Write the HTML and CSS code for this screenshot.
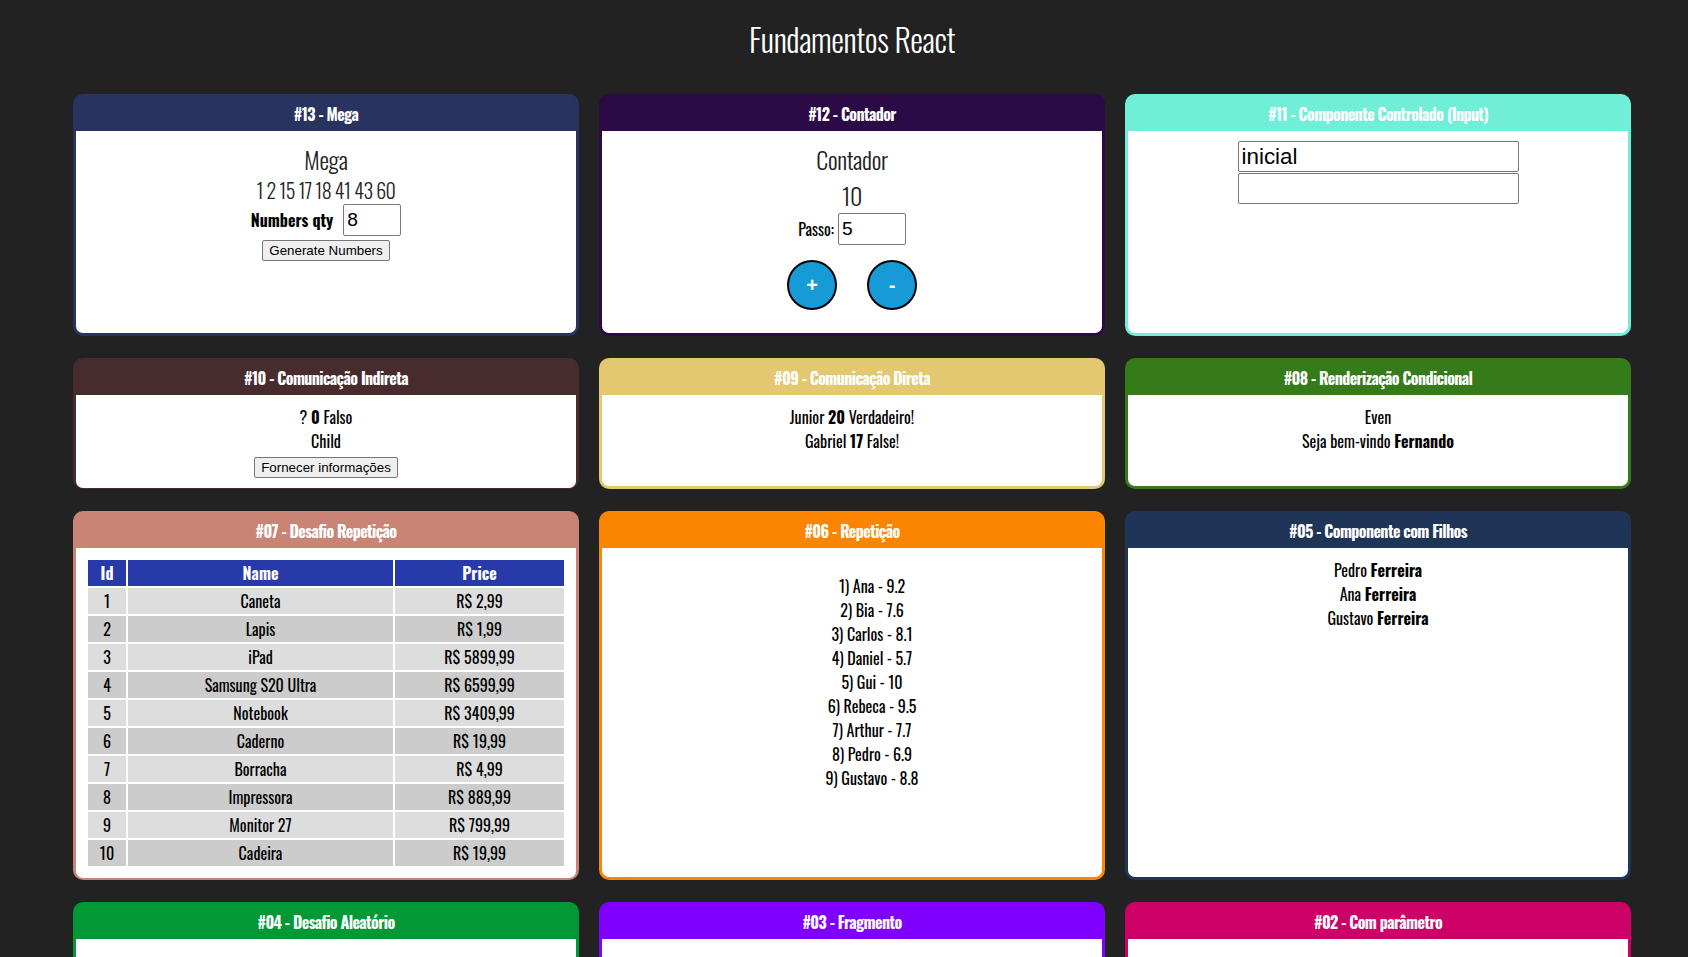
FILE: index.html
```html
<!DOCTYPE html>
<html lang="pt-BR">
<head>
<meta charset="utf-8">
<title>Fundamentos React</title>
<link rel="stylesheet" href="styles.css">
</head>
<body>
<div class="app">
  <h1 class="app-title">Fundamentos React</h1>
  <div class="cards">

    <section class="card accent-13">
      <div class="card-title">#13 - Mega</div>
      <div class="card-content">
        <h2 class="display">Mega</h2>
        <div class="mega-numbers">1 2 15 17 18 41 43 60</div>
        <div class="field-row">
          <strong>Numbers qty</strong>
          <input class="input input-qty" type="text" value="8">
        </div>
        <div class="btn-line btn-line-generate"><button class="btn">Generate Numbers</button></div>
      </div>
    </section>

    <section class="card accent-12">
      <div class="card-title">#12 - Contador</div>
      <div class="card-content">
        <h2 class="display">Contador</h2>
        <div class="display">10</div>
        <div class="field-row field-row-tight">
          <label>Passo:</label>
          <input class="input input-step" type="text" value="5">
        </div>
        <div class="counter-buttons">
          <button class="circle">+</button>
          <button class="circle">-</button>
        </div>
      </div>
    </section>

    <section class="card accent-11">
      <div class="card-title">#11 - Componente Controlado (Input)</div>
      <div class="card-content">
        <input class="input input-wide" type="text" value="inicial">
        <input class="input input-wide" type="text" value="">
      </div>
    </section>

    <section class="card accent-10">
      <div class="card-title">#10 - Comunicação Indireta</div>
      <div class="card-content">
        <div>? <strong>0</strong> Falso</div>
        <div>Child</div>
        <div class="btn-line btn-line-info"><button class="btn">Fornecer informações</button></div>
      </div>
    </section>

    <section class="card accent-09">
      <div class="card-title">#09 - Comunicação Direta</div>
      <div class="card-content">
        <div>Junior <strong>20</strong> Verdadeiro!</div>
        <div>Gabriel <strong>17</strong> False!</div>
      </div>
    </section>

    <section class="card accent-08">
      <div class="card-title">#08 - Renderização Condicional</div>
      <div class="card-content">
        <div>Even</div>
        <div>Seja bem-vindo <strong>Fernando</strong></div>
      </div>
    </section>

    <section class="card accent-07">
      <div class="card-title">#07 - Desafio Repetição</div>
      <div class="card-content">
        <table class="products">
          <thead>
            <tr><th class="col-id">Id</th><th class="col-name">Name</th><th>Price</th></tr>
          </thead>
          <tbody>
            <tr><td>1</td><td>Caneta</td><td>R$ 2,99</td></tr>
            <tr><td>2</td><td>Lapis</td><td>R$ 1,99</td></tr>
            <tr><td>3</td><td>iPad</td><td>R$ 5899,99</td></tr>
            <tr><td>4</td><td>Samsung S20 Ultra</td><td>R$ 6599,99</td></tr>
            <tr><td>5</td><td>Notebook</td><td>R$ 3409,99</td></tr>
            <tr><td>6</td><td>Caderno</td><td>R$ 19,99</td></tr>
            <tr><td>7</td><td>Borracha</td><td>R$ 4,99</td></tr>
            <tr><td>8</td><td>Impressora</td><td>R$ 889,99</td></tr>
            <tr><td>9</td><td>Monitor 27</td><td>R$ 799,99</td></tr>
            <tr><td>10</td><td>Cadeira</td><td>R$ 19,99</td></tr>
          </tbody>
        </table>
      </div>
    </section>

    <section class="card accent-06">
      <div class="card-title">#06 - Repetição</div>
      <div class="card-content">
        <ul class="ranking">
          <li>1) Ana - 9.2</li>
          <li>2) Bia - 7.6</li>
          <li>3) Carlos - 8.1</li>
          <li>4) Daniel - 5.7</li>
          <li>5) Gui - 10</li>
          <li>6) Rebeca - 9.5</li>
          <li>7) Arthur - 7.7</li>
          <li>8) Pedro - 6.9</li>
          <li>9) Gustavo - 8.8</li>
        </ul>
      </div>
    </section>

    <section class="card accent-05">
      <div class="card-title">#05 - Componente com Filhos</div>
      <div class="card-content">
        <div>Pedro <strong>Ferreira</strong></div>
        <div>Ana <strong>Ferreira</strong></div>
        <div>Gustavo <strong>Ferreira</strong></div>
      </div>
    </section>

    <section class="card accent-04">
      <div class="card-title">#04 - Desafio Aleatório</div>
      <div class="card-content"></div>
    </section>

    <section class="card accent-03">
      <div class="card-title">#03 - Fragmento</div>
      <div class="card-content"></div>
    </section>

    <section class="card accent-02">
      <div class="card-title">#02 - Com parâmetro</div>
      <div class="card-content"></div>
    </section>

  </div>
</div>
</body>
</html>
```

FILE: styles.css
```css
* { box-sizing: border-box; }

html, body {
  margin: 0;
  background: #222;
}

body {
  font-family: "Oswald", "Liberation Sans Narrow", sans-serif;
  color: #000;
}

.app {
  padding: 0 57px 0 73px;
}

.app-title {
  margin: 0;
  padding: 18px 0 34px;
  line-height: 42px;
  font-family: "Oswald Light", "Oswald", sans-serif;
  font-size: 32px;
  font-weight: 300;
  letter-spacing: -0.4px;
  color: #fff;
  text-align: center;
}

.cards {
  display: grid;
  grid-template-columns: repeat(3, 1fr);
  grid-template-rows: 242px 131px 369px 242px;
  gap: 22px 20px;
}

.card {
  display: flex;
  flex-direction: column;
  border: 3px solid var(--accent);
  border-radius: 10px;
  background: var(--accent);
}

.accent-13 { --accent: #29335f; }
.accent-12 { --accent: #2c0a45; }
.accent-11 { --accent: #71eed8; }
.accent-10 { --accent: #482b2d; }
.accent-09 { --accent: #e3c771; }
.accent-08 { --accent: #367b1a; }
.accent-07 { --accent: #c98475; }
.accent-06 { --accent: #fc8500; }
.accent-05 { --accent: #1f3557; }
.accent-04 { --accent: #009936; }
.accent-03 { --accent: #8000ff; }
.accent-02 { --accent: #cc0066; }

.card-title {
  flex: none;
  height: 34px;
  display: flex;
  align-items: center;
  justify-content: center;
  color: #fff;
  font-size: 16px;
  font-weight: 700;
  letter-spacing: -0.6px;
}

.card-content {
  flex: 1;
  background: #fff;
  border-radius: 0 0 7px 7px;
  padding: 10px;
  text-align: center;
  font-size: 16px;
  line-height: 24px;
}

.display {
  margin: 0;
  font-family: "Oswald Light", "Oswald", sans-serif;
  font-size: 24px;
  font-weight: 300;
  line-height: 36px;
  letter-spacing: -0.3px;
  color: #222;
}

.mega-numbers {
  font-family: "Oswald Light", "Oswald", sans-serif;
  font-size: 20px;
  font-weight: 300;
  line-height: 27px;
  letter-spacing: -0.5px;
  color: #222;
}

.field-row {
  display: flex;
  justify-content: center;
  align-items: center;
  gap: 10px;
  height: 32px;
}

.field-row-tight { gap: 4px; }

.input {
  font-family: "Liberation Sans", Arial, sans-serif;
  color: #000;
  background: #fff;
  border: 1px solid #767676;
  border-radius: 2px;
  padding: 1px 3px;
  height: 32px;
  margin: 0;
}

.input-qty { width: 58px; font-size: 19.2px; }
.input-step { width: 68px; font-size: 19.2px; }

.input-wide {
  display: block;
  width: 281px;
  height: 31px;
  margin: 0 auto;
  font-size: 22.4px;
}

.input-wide + .input-wide { margin-top: 1px; }

.btn-line {
  display: flex;
  justify-content: center;
}

.btn-line-generate { padding-top: 4px; }
.btn-line-info { padding-top: 4px; }

.btn {
  font-family: "Liberation Sans", Arial, sans-serif;
  font-size: 13.333px;
  height: 21px;
  padding: 1px 6px;
  color: #000;
  background: #efefef;
  border: 1px solid #767676;
  border-radius: 2px;
}

.counter-buttons {
  display: flex;
  justify-content: center;
  gap: 30px;
  margin-top: 15px;
}

.circle {
  width: 50px;
  height: 50px;
  padding: 0;
  border-radius: 50%;
  border: 2px solid #000;
  background: #169bd6;
  color: #fff;
  font-family: "Liberation Sans", Arial, sans-serif;
  font-size: 20px;
  font-weight: 700;
}

.products {
  width: 100%;
  border-spacing: 2px;
  font-size: 16px;
  line-height: 24px;
}

.products th,
.products td {
  height: 26px;
  padding: 0;
}

.products th {
  background: #283aa9;
  color: #fff;
  font-weight: 700;
}

.products .col-id { width: 38px; }
.products .col-name { width: 265px; }

.products tbody tr:nth-child(odd) td { background: #dddddd; }
.products tbody tr:nth-child(even) td { background: #cccccc; }

.ranking {
  list-style: none;
  margin: 16px 0;
  padding-left: 40px;
}
```
